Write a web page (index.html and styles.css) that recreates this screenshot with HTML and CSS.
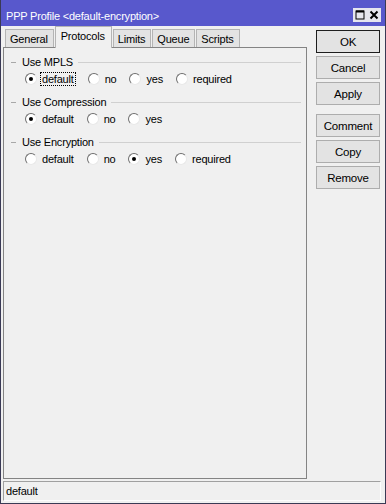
FILE: index.html
```html
<!DOCTYPE html>
<html>
<head>
<meta charset="utf-8">
<link rel="stylesheet" href="styles.css">
</head>
<body>
<div class="window">
  <div class="titlebar">
    <span class="title">PPP Profile &lt;default-encryption&gt;</span>
    <div class="controls">
      <span class="ctl"><svg width="14" height="14" viewBox="0 0 14 14"><rect x="3" y="3" width="8" height="8" fill="none" stroke="#000" stroke-width="1"/><line x1="3" y1="3.5" x2="11" y2="3.5" stroke="#000" stroke-width="2"/></svg></span>
      <span class="ctl"><svg width="14" height="14" viewBox="0 0 14 14"><path d="M3.5 3.5 L10.5 10.5 M10.5 3.5 L3.5 10.5" stroke="#000" stroke-width="2" fill="none"/></svg></span>
    </div>
  </div>
  <div class="main">
    <div class="left">
      <div class="tabs">
        <div class="tab">General</div>
        <div class="tab active">Protocols</div>
        <div class="tab">Limits</div>
        <div class="tab">Queue</div>
        <div class="tab">Scripts</div>
      </div>
      <div class="panel">
        <div class="group">
          <div class="legend"><span class="dash"></span><span>Use MPLS</span><span class="rule"></span></div>
          <div class="options">
            <label class="opt"><span class="radio on"></span><span class="focus">default</span></label>
            <label class="opt"><span class="radio"></span><span>no</span></label>
            <label class="opt"><span class="radio"></span><span>yes</span></label>
            <label class="opt"><span class="radio"></span><span>required</span></label>
          </div>
        </div>
        <div class="group">
          <div class="legend"><span class="dash"></span><span>Use Compression</span><span class="rule"></span></div>
          <div class="options">
            <label class="opt"><span class="radio on"></span><span>default</span></label>
            <label class="opt"><span class="radio"></span><span>no</span></label>
            <label class="opt"><span class="radio"></span><span>yes</span></label>
          </div>
        </div>
        <div class="group">
          <div class="legend"><span class="dash"></span><span>Use Encryption</span><span class="rule"></span></div>
          <div class="options">
            <label class="opt"><span class="radio"></span><span>default</span></label>
            <label class="opt"><span class="radio"></span><span>no</span></label>
            <label class="opt"><span class="radio on"></span><span>yes</span></label>
            <label class="opt"><span class="radio"></span><span>required</span></label>
          </div>
        </div>
      </div>
    </div>
    <div class="buttons">
      <div class="btn default">OK</div>
      <div class="btn">Cancel</div>
      <div class="btn">Apply</div>
      <div class="btn sep">Comment</div>
      <div class="btn">Copy</div>
      <div class="btn">Remove</div>
    </div>
  </div>
  <div class="status">default</div>
</div>
</body>
</html>
```
FILE: styles.css
```css
html, body {
  margin: 0;
  padding: 0;
  background: #f0f0f0;
}
body {
  font-family: "Liberation Sans", Arial, sans-serif;
  font-size: 11px;
  letter-spacing: -0.2px;
  color: #000;
}
.window {
  width: 386px;
  height: 504px;
  box-sizing: border-box;
  border: 1px solid #3a3a55;
  border-top: none;
  background: #f0f0f0;
  display: flex;
  flex-direction: column;
}
.titlebar {
  height: 26px;
  flex: none;
  background: #5858cc;
  color: #fff;
  display: flex;
  align-items: flex-start;
  padding: 0 5px;
}
.title {
  margin-top: 10px;
  line-height: 13px;
}
.controls {
  margin-left: auto;
  margin-top: 8px;
  margin-right: -1px;
  display: flex;
}
.ctl {
  width: 14px;
  height: 14px;
  background: #e6e6ee;
  display: block;
}
.ctl svg { display: block; }
.main {
  flex: 1;
  display: flex;
  padding-left: 2px;
}
.left {
  width: 304px;
  display: flex;
  flex-direction: column;
}
.tabs {
  display: flex;
  align-items: flex-end;
  padding: 1px 0 0 2px;
  height: 21px;
  box-sizing: border-box;
}
.tab {
  height: 18px;
  line-height: 18px;
  padding: 0 5px 0 4px;
  background: #e3e3e3;
  border: 1px solid #b4b4b4;
  border-bottom: none;
  box-sizing: border-box;
  margin-right: 1px;
  position: relative;
  z-index: 1;
}
.tab.active {
  height: 22px;
  line-height: 18px;
  padding: 0 6px 3px 5px;
  background: #f0f0f0;
  margin-bottom: -1px;
  z-index: 2;
}
.panel {
  flex: 1;
  border: 1px solid #848484;
  background: #f0f0f0;
  padding-top: 7px;
  margin-bottom: 1px;
}
.group {
  margin: 0 5px 8px 7px;
}
.legend {
  display: flex;
  align-items: center;
  height: 14px;
  line-height: 14px;
}
.dash {
  width: 5px;
  border-top: 1px solid #a8a8a8;
  margin-right: 6px;
}
.rule {
  flex: 1;
  border-top: 1px solid #d0d0d0;
  margin-left: 5px;
}
.options {
  display: flex;
  align-items: center;
  gap: 13px;
  height: 16px;
  margin-top: 2px;
  padding-left: 14px;
}
.opt {
  display: flex;
  align-items: center;
  gap: 5px;
}
.radio {
  width: 12px;
  height: 12px;
  box-sizing: border-box;
  border-radius: 50%;
  background: #fff;
  border: 1px solid;
  border-color: #6e6e6e #e8e8e8 #e8e8e8 #6e6e6e;
  position: relative;
}
.radio.on::after {
  content: "";
  position: absolute;
  left: 3px;
  top: 3px;
  width: 4px;
  height: 4px;
  border-radius: 50%;
  background: #000;
}
.focus {
  outline: 1px dotted #000;
  outline-offset: 0px;
  padding: 0 1px;
  margin-left: -1px;
}
.buttons {
  width: 64px;
  margin-left: 9px;
  padding-top: 4px;
  display: flex;
  flex-direction: column;
  gap: 3px;
}
.btn {
  height: 23px;
  box-sizing: border-box;
  border: 1px solid #adadad;
  background: #e3e3e3;
  display: flex;
  align-items: center;
  justify-content: center;
  font-size: 11.5px;
}
.btn.default {
  border-color: #1e1e1e;
}
.btn.sep {
  margin-top: 6px;
}
.status {
  flex: none;
  height: 20px;
  margin: 1px 4px 2px 2px;
  box-sizing: border-box;
  border: 1px solid;
  border-color: #a0a0a0 #fdfdfd #fdfdfd #a0a0a0;
  line-height: 18px;
  padding-left: 2px;
}
```
